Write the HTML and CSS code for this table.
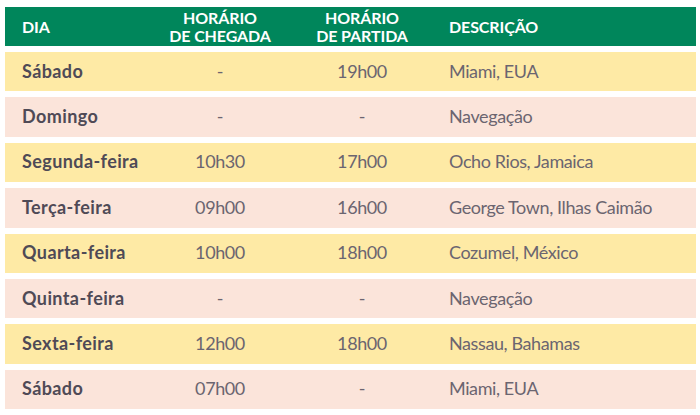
FILE: index.html
```html
<!DOCTYPE html>
<html lang="pt">
<head>
<meta charset="utf-8">
<title>Itinerário</title>
<link rel="stylesheet" href="styles.css">
</head>
<body>
<div class="schedule">
  <div class="row head">
    <div class="c day">DIA</div>
    <div class="c mid">HORÁRIO<br>DE CHEGADA</div>
    <div class="c mid">HORÁRIO<br>DE PARTIDA</div>
    <div class="c desc">DESCRIÇÃO</div>
  </div>
  <div class="row y">
    <div class="c day">Sábado</div><div class="c mid">-</div><div class="c mid">19h00</div><div class="c desc">Miami, EUA</div>
  </div>
  <div class="row p">
    <div class="c day">Domingo</div><div class="c mid">-</div><div class="c mid">-</div><div class="c desc">Navegação</div>
  </div>
  <div class="row y">
    <div class="c day">Segunda-feira</div><div class="c mid">10h30</div><div class="c mid">17h00</div><div class="c desc">Ocho Rios, Jamaica</div>
  </div>
  <div class="row p">
    <div class="c day">Terça-feira</div><div class="c mid">09h00</div><div class="c mid">16h00</div><div class="c desc">George Town, Ilhas Caimão</div>
  </div>
  <div class="row y">
    <div class="c day">Quarta-feira</div><div class="c mid">10h00</div><div class="c mid">18h00</div><div class="c desc">Cozumel, México</div>
  </div>
  <div class="row p">
    <div class="c day">Quinta-feira</div><div class="c mid">-</div><div class="c mid">-</div><div class="c desc">Navegação</div>
  </div>
  <div class="row y">
    <div class="c day">Sexta-feira</div><div class="c mid">12h00</div><div class="c mid">18h00</div><div class="c desc">Nassau, Bahamas</div>
  </div>
  <div class="row p">
    <div class="c day">Sábado</div><div class="c mid">07h00</div><div class="c mid">-</div><div class="c desc">Miami, EUA</div>
  </div>
</div>
</body>
</html>
```

FILE: styles.css
```css
html, body {
  margin: 0;
  padding: 0;
  background: #ffffff;
}

body {
  font-family: Lato, "Open Sans", sans-serif;
  color: #6b6570;
}

.schedule {
  margin: 7px 4px 0 5px;
  display: flex;
  flex-direction: column;
  gap: 6px;
}

.row {
  display: grid;
  grid-template-columns: 140px 116px 168px 1fr;
  align-items: center;
  padding-left: 17px;
  padding-bottom: 2px;
  box-sizing: border-box;
  height: 39.4px;
  font-size: 18px;
  letter-spacing: -0.4px;
}

.row.head {
  height: 39px;
  padding-bottom: 0;
  padding-top: 1px;
  background: #00865b;
  color: #ffffff;
  font-weight: 700;
  font-size: 16px;
  line-height: 18.5px;
  letter-spacing: -0.1px;
}

.row.y { background: #feeaa5; }
.row.p { background: #fbe4da; }

.c.day {
  font-weight: 700;
}

.row.y .c.day,
.row.p .c.day {
  color: #4f4a56;
  letter-spacing: 0.4px;
}

.c.mid {
  text-align: center;
}

.c.desc {
  padding-left: 3px;
}
```
